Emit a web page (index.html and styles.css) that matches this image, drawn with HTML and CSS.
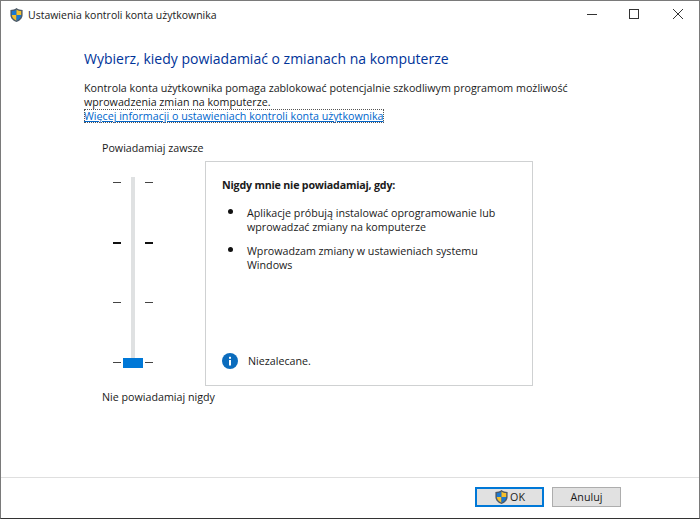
FILE: index.html
```html
<!DOCTYPE html>
<html lang="pl">
<head>
    <meta charset="UTF-8">
    <title>Ustawienia kontroli konta użytkownika</title>
    <link rel="stylesheet" href="styles.css">
</head>
<body>
<div class="window">
    <div class="titlebar">
        <svg class="shield-small" viewBox="0 0 16 16">
            <path d="M8 .5C6 2 4 2.6 1.5 2.6V8c0 3.6 3 6.2 6.5 7.5 3.5-1.3 6.5-3.9 6.5-7.5V2.6C12 2.6 10 2 8 .5z" fill="#4d5a68"/>
            <path d="M8 2v6H3V3.7C5 3.6 6.5 3.1 8 2z" fill="#1b78d0"/>
            <path d="M8 2c1.5 1.1 3 1.6 5 1.7V8H8z" fill="#f5c02c"/>
            <path d="M3 8h5v6C5.5 13 3.2 11 3 8z" fill="#f5c02c"/>
            <path d="M8 8h5c-.2 3-2.5 5-5 6z" fill="#1b78d0"/>
        </svg>
        <span class="title-text">Ustawienia kontroli konta użytkownika</span>
        <div class="window-buttons">
            <svg class="win-btn" viewBox="0 0 44 30"><path d="M20 13.5h10" stroke="#333" fill="none"/></svg>
            <svg class="win-btn" viewBox="0 0 44 30"><rect x="18.5" y="8.5" width="9" height="9" stroke="#333" fill="none"/></svg>
            <svg class="win-btn" viewBox="0 0 44 30"><path d="M18 8l10 10M28 8L18 18" stroke="#333" fill="none"/></svg>
        </div>
    </div>

    <div class="content">
        <h1>Wybierz, kiedy powiadamiać o zmianach na komputerze</h1>
        <p class="intro">Kontrola konta użytkownika pomaga zablokować potencjalnie szkodliwym programom możliwość wprowadzenia zmian na komputerze.</p>
        <a class="more-link" href="#">Więcej informacji o ustawieniach kontroli konta użytkownika</a>

        <div class="settings">
            <div class="slider-col">
                <div class="slider-label">Powiadamiaj zawsze</div>
                <div class="slider">
                    <div class="track"></div>
                    <div class="thumb"></div>
                    <div class="tick-row"><span class="tick"></span><span class="tick"></span></div>
                    <div class="tick-row bold"><span class="tick"></span><span class="tick"></span></div>
                    <div class="tick-row"><span class="tick"></span><span class="tick"></span></div>
                    <div class="tick-row"><span class="tick"></span><span class="tick"></span></div>
                </div>
                <div class="slider-label bottom-label">Nie powiadamiaj nigdy</div>
            </div>

            <div class="panel">
                <div class="panel-title">Nigdy mnie nie powiadamiaj, gdy:</div>
                <ul class="panel-list">
                    <li>Aplikacje próbują instalować oprogramowanie lub wprowadzać zmiany na komputerze</li>
                    <li>Wprowadzam zmiany w ustawieniach systemu Windows</li>
                </ul>
                <div class="panel-note">
                    <svg class="info-icon" viewBox="0 0 16 16">
                        <circle cx="8" cy="8" r="8" fill="#0b6cbd"/>
                        <rect x="7" y="7" width="2" height="5.5" fill="#fff"/>
                        <rect x="7" y="3.8" width="2" height="2" fill="#fff"/>
                    </svg>
                    <span>Niezalecane.</span>
                </div>
            </div>
        </div>
    </div>

    <div class="footer">
        <button class="btn btn-default" type="button">
            <svg class="shield-btn" viewBox="0 0 16 16">
                <path d="M8 .5C6 2 4 2.6 1.5 2.6V8c0 3.6 3 6.2 6.5 7.5 3.5-1.3 6.5-3.9 6.5-7.5V2.6C12 2.6 10 2 8 .5z" fill="#4d5a68"/>
                <path d="M8 2v6H3V3.7C5 3.6 6.5 3.1 8 2z" fill="#1b78d0"/>
                <path d="M8 2c1.5 1.1 3 1.6 5 1.7V8H8z" fill="#f5c02c"/>
                <path d="M3 8h5v6C5.5 13 3.2 11 3 8z" fill="#f5c02c"/>
                <path d="M8 8h5c-.2 3-2.5 5-5 6z" fill="#1b78d0"/>
            </svg>
            OK
        </button>
        <button class="btn" type="button">Anuluj</button>
    </div>
</div>
</body>
</html>
```

FILE: styles.css
```css
* {
    box-sizing: border-box;
}

html, body {
    margin: 0;
    height: 100%;
}

body {
    font-family: "Open Sans", "Noto Sans", sans-serif;
    font-size: 10.7px;
    color: #1a1a1a;
    background-color: white;
}

.window {
    display: flex;
    flex-direction: column;
    height: 519px;
    border: 1px solid #7a7a7a;
    border-bottom-color: #333;
}

.titlebar {
    display: flex;
    align-items: center;
    height: 28px;
    flex-shrink: 0;
    padding-left: 8px;
}

.shield-small {
    width: 15px;
    height: 16px;
    margin-right: 4px;
}

.title-text {
    flex: 1;
    font-size: 10.5px;
}

.window-buttons {
    display: flex;
    align-self: flex-start;
}

.win-btn {
    width: 44px;
    height: 30px;
    display: block;
}

.content {
    flex: 1;
    padding: 20px 0 0 83px;
}

h1 {
    margin: 0;
    font-size: 14px;
    font-weight: normal;
    line-height: 20px;
    color: #003399;
}

.intro {
    margin: 12px 0 0;
    width: 500px;
    line-height: 14px;
}

.more-link {
    display: inline-block;
    line-height: 14px;
    color: #0066cc;
    text-decoration: underline;
    outline: 1px dotted #555;
    outline-offset: -1px;
}

.settings {
    display: flex;
    margin-top: 18px;
}

.slider-col {
    width: 121px;
    padding-left: 18px;
}

.slider-label {
    line-height: 15px;
    white-space: nowrap;
}

.slider {
    position: relative;
    width: 40px;
    height: 191px;
    margin: 21px 0 0 11px;
    padding-top: 5px;
}

.track {
    position: absolute;
    left: 18px;
    top: 0;
    width: 4px;
    height: 191px;
    background-color: #dfe1e2;
}

.thumb {
    position: absolute;
    left: 10px;
    top: 181px;
    width: 20px;
    height: 10px;
    background-color: #0078d7;
}

.tick-row {
    display: flex;
    justify-content: space-between;
    height: 60px;
}

.tick {
    width: 8px;
    height: 1px;
    background-color: #444;
}

.tick-row.bold .tick {
    height: 2px;
    background-color: #111;
}

.bottom-label {
    margin-top: 22px;
}

.panel {
    position: relative;
    width: 328px;
    height: 225px;
    margin-top: 20px;
    border: 1px solid #cfd1d2;
    padding: 16px 16px 0;
}

.panel-title {
    font-weight: bold;
    line-height: 15px;
    letter-spacing: -0.2px;
}

.panel-list {
    margin: 13px 0 0;
    padding: 0 0 0 25px;
    list-style: none;
}

.panel-list li {
    position: relative;
    width: 260px;
    line-height: 14px;
    margin-bottom: 10px;
}

.panel-list li::before {
    content: "";
    position: absolute;
    left: -19px;
    top: 3px;
    width: 5px;
    height: 5px;
    border-radius: 50%;
    background-color: #111;
}

.panel-note {
    position: absolute;
    left: 16px;
    top: 191px;
    display: flex;
    align-items: center;
    gap: 10px;
    line-height: 16px;
}

.info-icon {
    width: 16px;
    height: 16px;
}

.footer {
    display: flex;
    justify-content: flex-end;
    gap: 8px;
    height: 41px;
    flex-shrink: 0;
    padding: 9px 78px 0 0;
    border-top: 1px solid #dfdfdf;
}

.btn {
    display: flex;
    align-items: center;
    justify-content: center;
    width: 69px;
    height: 20px;
    padding: 0;
    font: inherit;
    color: #1a1a1a;
    background-color: #e1e1e1;
    border: 1px solid #adadad;
}

.btn-default {
    border: 2px solid #0078d7;
}

.shield-btn {
    width: 15px;
    height: 16px;
    margin-right: 1px;
}
```
